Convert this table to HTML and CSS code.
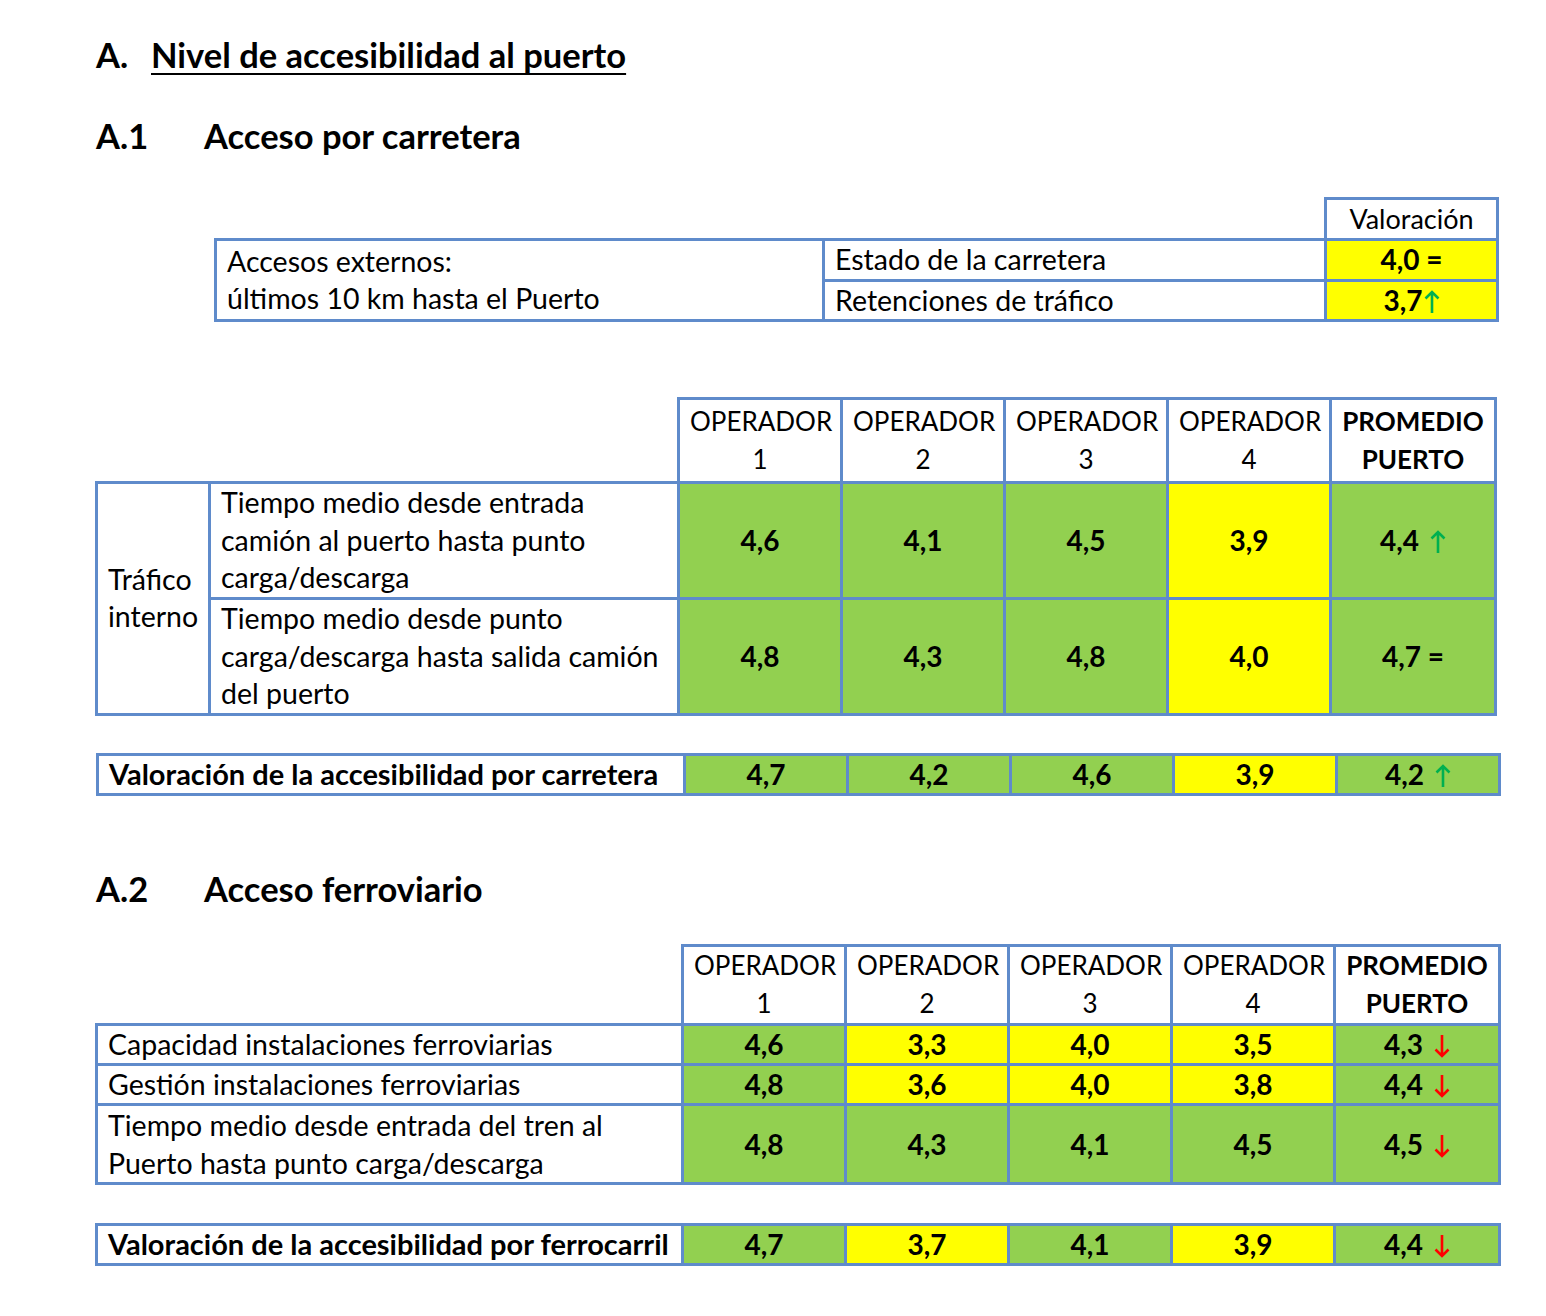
FILE: index.html
```html
<!DOCTYPE html>
<html lang="es">
<head>
<meta charset="utf-8">
<title>Nivel de accesibilidad al puerto</title>
<link rel="stylesheet" href="styles.css">
</head>
<body>
<div class="page">
  <h1 class="h-main"><span class="num">A.</span><span class="ul">Nivel de accesibilidad al puerto</span></h1>
  <h2 class="h-sub h-a1"><span class="num2">A.1</span>Acceso por carretera</h2>

  <table class="t t-ext">
    <colgroup><col class="c-ext1"><col class="c-ext2"><col class="c-ext3"></colgroup>
    <tr class="r-vh"><td class="blank"></td><td class="blank"></td><td class="hd-val">Valoración</td></tr>
    <tr class="r-ext"><td rowspan="2" class="lbl">Accesos externos:<br>últimos 10 km hasta el Puerto</td><td class="lbl">Estado de la carretera</td><td class="v y">4,0 =</td></tr>
    <tr class="r-ext"><td class="lbl">Retenciones de tráfico</td><td class="v y">3,7<svg class="arr up tight" viewBox="0 0 16 24"><path d="M8 23V2M1.5 8.5L8 2l6.5 6.5"/></svg></td></tr>
  </table>

  <table class="t t-int">
    <colgroup><col class="c-a"><col class="c-b"><col class="c-o"><col class="c-o"><col class="c-o"><col class="c-o"><col class="c-p"></colgroup>
    <tr class="r-hd"><td class="blank"></td><td class="blank"></td><td class="hd">OPERADOR<br>1</td><td class="hd">OPERADOR<br>2</td><td class="hd">OPERADOR<br>3</td><td class="hd">OPERADOR<br>4</td><td class="hd b">PROMEDIO<br>PUERTO</td></tr>
    <tr class="r-int1"><td rowspan="2" class="lbl grp">Tráfico<br>interno</td><td class="lbl">Tiempo medio desde entrada<br>camión al puerto hasta punto<br>carga/descarga</td><td class="v g">4,6</td><td class="v g">4,1</td><td class="v g">4,5</td><td class="v y">3,9</td><td class="v g">4,4 <svg class="arr up" viewBox="0 0 16 24"><path d="M8 23V2M1.5 8.5L8 2l6.5 6.5"/></svg></td></tr>
    <tr class="r-int2"><td class="lbl">Tiempo medio desde punto<br>carga/descarga hasta salida camión<br>del puerto</td><td class="v g">4,8</td><td class="v g">4,3</td><td class="v g">4,8</td><td class="v y">4,0</td><td class="v g">4,7 =</td></tr>
  </table>

  <table class="t t-sum1">
    <colgroup><col class="c-s1"><col class="c-o"><col class="c-o"><col class="c-o"><col class="c-o"><col class="c-o"></colgroup>
    <tr class="r-sum"><td class="lbl b">Valoración de la accesibilidad por carretera</td><td class="v g">4,7</td><td class="v g">4,2</td><td class="v g">4,6</td><td class="v y">3,9</td><td class="v g">4,2 <svg class="arr up" viewBox="0 0 16 24"><path d="M8 23V2M1.5 8.5L8 2l6.5 6.5"/></svg></td></tr>
  </table>

  <h2 class="h-sub h-a2"><span class="num2">A.2</span>Acceso ferroviario</h2>

  <table class="t t-fer">
    <colgroup><col class="c-f1"><col class="c-o"><col class="c-o"><col class="c-o"><col class="c-o"><col class="c-p"></colgroup>
    <tr class="r-hd2"><td class="blank"></td><td class="hd">OPERADOR<br>1</td><td class="hd">OPERADOR<br>2</td><td class="hd">OPERADOR<br>3</td><td class="hd">OPERADOR<br>4</td><td class="hd b">PROMEDIO<br>PUERTO</td></tr>
    <tr class="r-f"><td class="lbl">Capacidad instalaciones ferroviarias</td><td class="v g">4,6</td><td class="v y">3,3</td><td class="v y">4,0</td><td class="v y">3,5</td><td class="v g">4,3 <svg class="arr dn" viewBox="0 0 16 24"><path d="M8 1v21M1.5 15.5L8 22l6.5-6.5"/></svg></td></tr>
    <tr class="r-f"><td class="lbl">Gestión instalaciones ferroviarias</td><td class="v g">4,8</td><td class="v y">3,6</td><td class="v y">4,0</td><td class="v y">3,8</td><td class="v g">4,4 <svg class="arr dn" viewBox="0 0 16 24"><path d="M8 1v21M1.5 15.5L8 22l6.5-6.5"/></svg></td></tr>
    <tr class="r-f2"><td class="lbl">Tiempo medio desde entrada del tren al<br>Puerto hasta punto carga/descarga</td><td class="v g">4,8</td><td class="v g">4,3</td><td class="v g">4,1</td><td class="v g">4,5</td><td class="v g">4,5 <svg class="arr dn" viewBox="0 0 16 24"><path d="M8 1v21M1.5 15.5L8 22l6.5-6.5"/></svg></td></tr>
  </table>

  <table class="t t-sum2">
    <colgroup><col class="c-f1"><col class="c-o"><col class="c-o"><col class="c-o"><col class="c-o"><col class="c-p"></colgroup>
    <tr class="r-sum"><td class="lbl b">Valoración de la accesibilidad por ferrocarril</td><td class="v g">4,7</td><td class="v y">3,7</td><td class="v g">4,1</td><td class="v y">3,9</td><td class="v g">4,4 <svg class="arr dn" viewBox="0 0 16 24"><path d="M8 1v21M1.5 15.5L8 22l6.5-6.5"/></svg></td></tr>
  </table>
</div>
</body>
</html>
```

FILE: styles.css
```css
html, body {
  margin: 0;
  padding: 0;
  background: #ffffff;
}
body {
  font-family: "Lato", "Liberation Sans", sans-serif;
  color: #000000;
}
.page {
  padding: 34px 0 0 96px;
}
.h-main {
  margin: 0;
  font-size: 34.5px;
  font-weight: 700;
  line-height: 42px;
  display: flex;
}
.num {
  width: 55px;
}
.ul {
  text-decoration: underline;
  text-decoration-thickness: 2px;
  text-underline-offset: 5px;
  text-decoration-skip-ink: none;
}
.h-sub {
  margin: 0;
  font-size: 34.5px;
  font-weight: 700;
  line-height: 42px;
  display: flex;
}
.h-a1 {
  margin-top: 39px;
}
.h-a2 {
  margin-top: 72px;
}
.num2 {
  width: 108px;
}
.t {
  border-collapse: collapse;
  table-layout: fixed;
  font-size: 28.5px;
}
.t td {
  border: 3px solid #5f8bcb;
  padding: 0 10px;
  line-height: 37.5px;
}
.t td.blank {
  border: none;
}
.t .b {
  font-weight: 700;
}
.lbl {
  text-align: left;
  vertical-align: middle;
  white-space: nowrap;
}
.lbl.b {
  font-size: 29px;
}
.v {
  text-align: center;
  vertical-align: middle;
  font-weight: 700;
  white-space: nowrap;
  font-size: 28px;
}
.g { background: #92d050; }
.y { background: #ffff00; }
.hd {
  text-align: center;
  vertical-align: middle;
  line-height: 37px;
  white-space: nowrap;
  padding: 0;
  font-size: 26px;
}
.hd-val {
  text-align: center;
  padding: 0;
  font-size: 27px;
}
.arr {
  width: 16px;
  height: 24px;
  margin-left: 4px;
  vertical-align: -3px;
  fill: none;
  stroke-width: 2.6;
}
.arr.tight {
  margin-left: 1px;
}
.arr.up { stroke: #00b050; }
.arr.dn { stroke: #ff0000; }

/* table 1 */
.t-ext {
  margin: 40px 0 0 118px;
  width: 1282px;
}
.c-ext1 { width: 608px; }
.c-ext2 { width: 502px; }
.c-ext3 { width: 172px; }
.r-vh td { height: 38px; }
.r-ext td { height: 37px; }

/* table 2 */
.t-int {
  margin: 75px 0 0 -1px;
  width: 1399px;
}
.c-a { width: 113px; }
.c-b { width: 469px; }
.c-o { width: 163px; }
.c-p { width: 165px; }
.r-hd td { height: 81px; }
.r-int1 td { height: 113px; }
.r-int2 td { height: 111px; }
.grp { padding: 0 8px; }

/* summary 1 */
.t-sum1 {
  margin: 37px 0 0 0;
  width: 1399px;
}
.c-s1 { width: 587px; }
.r-sum td { height: 37px; line-height: 34px; }

/* table 4 */
.t-fer {
  margin: 34px 0 0 -1px;
  width: 1403px;
}
.c-f1 { width: 586px; }
.r-hd2 td { height: 76px; }
.r-f td { height: 37px; line-height: 34px; }
.r-f2 td { height: 72px; line-height: 38px; }

.t-sum2 {
  margin: 38px 0 0 -1px;
  width: 1403px;
}
```
